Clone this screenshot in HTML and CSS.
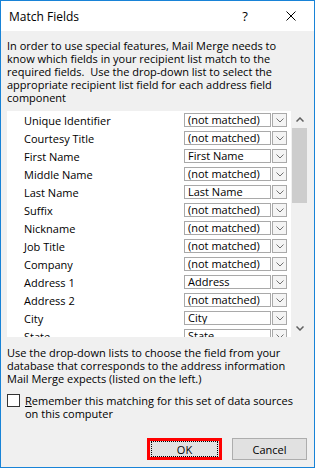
FILE: index.html
```html
<!DOCTYPE html>
<html>
<head>
<meta charset="utf-8">
<link rel="stylesheet" href="styles.css">
</head>
<body>
<div class="window">
  <div class="titlebar">
    <span class="title">Match Fields</span>
    <span class="cap help">?</span>
    <span class="cap close"><svg width="10" height="10" viewBox="0 0 10 10"><path d="M0.5 0.5L9.5 9.5M9.5 0.5L0.5 9.5" stroke="#000" stroke-width="1" fill="none"/></svg></span>
  </div>
  <div class="content">
    <p class="intro">In order to use special features, Mail Merge needs to<br>know which fields in your recipient list match to the<br>required fields.&nbsp; Use the drop-down list to select the<br>appropriate recipient list field for each address field<br>component</p>
    <div class="list">
      <div class="rows">
        <div class="row"><span class="label">Unique Identifier</span><span class="dd"><span class="dd-val">(not matched)</span><span class="dd-btn"><svg width="8" height="5" viewBox="0 0 8 5"><path d="M0.5 0.5L4 4L7.5 0.5" stroke="#707070" fill="none"/></svg></span></span></div>
        <div class="row"><span class="label">Courtesy Title</span><span class="dd"><span class="dd-val">(not matched)</span><span class="dd-btn"><svg width="8" height="5" viewBox="0 0 8 5"><path d="M0.5 0.5L4 4L7.5 0.5" stroke="#707070" fill="none"/></svg></span></span></div>
        <div class="row"><span class="label">First Name</span><span class="dd"><span class="dd-val">First Name</span><span class="dd-btn"><svg width="8" height="5" viewBox="0 0 8 5"><path d="M0.5 0.5L4 4L7.5 0.5" stroke="#707070" fill="none"/></svg></span></span></div>
        <div class="row"><span class="label">Middle Name</span><span class="dd"><span class="dd-val">(not matched)</span><span class="dd-btn"><svg width="8" height="5" viewBox="0 0 8 5"><path d="M0.5 0.5L4 4L7.5 0.5" stroke="#707070" fill="none"/></svg></span></span></div>
        <div class="row"><span class="label">Last Name</span><span class="dd"><span class="dd-val">Last Name</span><span class="dd-btn"><svg width="8" height="5" viewBox="0 0 8 5"><path d="M0.5 0.5L4 4L7.5 0.5" stroke="#707070" fill="none"/></svg></span></span></div>
        <div class="row"><span class="label">Suffix</span><span class="dd"><span class="dd-val">(not matched)</span><span class="dd-btn"><svg width="8" height="5" viewBox="0 0 8 5"><path d="M0.5 0.5L4 4L7.5 0.5" stroke="#707070" fill="none"/></svg></span></span></div>
        <div class="row"><span class="label">Nickname</span><span class="dd"><span class="dd-val">(not matched)</span><span class="dd-btn"><svg width="8" height="5" viewBox="0 0 8 5"><path d="M0.5 0.5L4 4L7.5 0.5" stroke="#707070" fill="none"/></svg></span></span></div>
        <div class="row"><span class="label">Job Title</span><span class="dd"><span class="dd-val">(not matched)</span><span class="dd-btn"><svg width="8" height="5" viewBox="0 0 8 5"><path d="M0.5 0.5L4 4L7.5 0.5" stroke="#707070" fill="none"/></svg></span></span></div>
        <div class="row"><span class="label">Company</span><span class="dd"><span class="dd-val">(not matched)</span><span class="dd-btn"><svg width="8" height="5" viewBox="0 0 8 5"><path d="M0.5 0.5L4 4L7.5 0.5" stroke="#707070" fill="none"/></svg></span></span></div>
        <div class="row"><span class="label">Address 1</span><span class="dd"><span class="dd-val">Address</span><span class="dd-btn"><svg width="8" height="5" viewBox="0 0 8 5"><path d="M0.5 0.5L4 4L7.5 0.5" stroke="#707070" fill="none"/></svg></span></span></div>
        <div class="row"><span class="label">Address 2</span><span class="dd"><span class="dd-val">(not matched)</span><span class="dd-btn"><svg width="8" height="5" viewBox="0 0 8 5"><path d="M0.5 0.5L4 4L7.5 0.5" stroke="#707070" fill="none"/></svg></span></span></div>
        <div class="row"><span class="label">City</span><span class="dd"><span class="dd-val">City</span><span class="dd-btn"><svg width="8" height="5" viewBox="0 0 8 5"><path d="M0.5 0.5L4 4L7.5 0.5" stroke="#707070" fill="none"/></svg></span></span></div>
        <div class="row"><span class="label">State</span><span class="dd"><span class="dd-val">State</span><span class="dd-btn"><svg width="8" height="5" viewBox="0 0 8 5"><path d="M0.5 0.5L4 4L7.5 0.5" stroke="#707070" fill="none"/></svg></span></span></div>
      </div>
      <div class="sb">
        <div class="sb-btn"><svg width="8" height="5" viewBox="0 0 8 5"><path d="M0.5 4.5L4 1L7.5 4.5" stroke="#606060" stroke-width="1.5" fill="none"/></svg></div>
        <div class="thumb"></div>
        <div class="sb-space"></div>
        <div class="sb-btn"><svg width="8" height="5" viewBox="0 0 8 5"><path d="M0.5 0.5L4 4L7.5 0.5" stroke="#606060" stroke-width="1.5" fill="none"/></svg></div>
      </div>
    </div>
    <p class="note">Use the drop-down lists to choose the field from your<br>database that corresponds to the address information<br>Mail Merge expects (listed on the left.)</p>
    <div class="check-row">
      <span class="checkbox"></span>
      <span class="check-label"><u>R</u>emember this matching for this set of data sources<br>on this computer</span>
    </div>
    <div class="buttons">
      <button class="btn btn-ok"><span class="focus">OK</span></button>
      <button class="btn btn-cancel">Cancel</button>
    </div>
  </div>
</div>
</body>
</html>
```

FILE: styles.css
```css
* { box-sizing: border-box; }
body {
  margin: 0;
  font-family: "Open Sans", "Noto Sans", sans-serif;
  font-size: 11px;
  color: #000;
}
.window {
  width: 315px;
  height: 468px;
  border: 1px solid #1883d7;
  background: #f0f0f0;
  display: flex;
  flex-direction: column;
}
.titlebar {
  height: 30px;
  flex-shrink: 0;
  background: #fff;
  display: flex;
  align-items: center;
}
.title {
  flex: 1;
  padding-left: 8px;
  font-size: 12px;
}
.cap {
  width: 46px;
  height: 30px;
  display: flex;
  align-items: center;
  justify-content: center;
}
.help {
  font-size: 13px;
}
.content {
  flex: 1;
  display: flex;
  flex-direction: column;
  padding: 8px 6px 0 6px;
}
.intro, .note {
  margin: 0;
  line-height: 13px;
  white-space: nowrap;
}
.list {
  margin-top: 7px;
  height: 226px;
  display: flex;
  flex-shrink: 0;
}
.rows {
  flex: 1;
  background: #fff;
  overflow: hidden;
  padding-top: 2px;
}
.row {
  height: 14px;
  margin-bottom: 4px;
  display: flex;
  align-items: center;
}
.label {
  width: 177px;
  padding-left: 17px;
  white-space: nowrap;
}
.dd {
  width: 103px;
  height: 14px;
  display: flex;
}
.dd-val {
  flex: 1;
  border: 1px solid #a9a9a9;
  padding-left: 3px;
  line-height: 12px;
  white-space: nowrap;
  overflow: hidden;
}
.dd-btn {
  width: 15px;
  margin-left: 1px;
  border: 1px solid #a9a9a9;
  background: #f4f4f4;
  display: flex;
  justify-content: center;
  align-items: flex-end;
  padding-bottom: 3px;
}
.dd-btn svg { display: block; }
.sb {
  width: 17px;
  background: #f0f0f0;
  display: flex;
  flex-direction: column;
}
.sb-btn {
  height: 17px;
  display: flex;
  align-items: center;
  justify-content: center;
}
.sb-btn svg { display: block; }
.thumb {
  height: 75px;
  margin: 0 1px;
  background: #cdcdcd;
}
.sb-space { flex: 1; }
.note {
  margin-top: 9px;
}
.check-row {
  margin-top: 9px;
  display: flex;
  align-items: flex-start;
  gap: 5px;
}
.checkbox {
  width: 13px;
  height: 13px;
  border: 1px solid #333;
  background: #fff;
  flex-shrink: 0;
}
.check-label {
  line-height: 13px;
  white-space: nowrap;
}
.buttons {
  margin-top: auto;
  display: flex;
  justify-content: flex-end;
  gap: 10px;
  padding: 0 1px 7px 0;
}
.btn {
  width: 75px;
  height: 22px;
  margin: 0;
  padding: 0;
  font-family: inherit;
  font-size: 11px;
  color: #000;
  background: #e1e1e1;
  display: flex;
  align-items: stretch;
  justify-content: center;
}
.btn-cancel {
  border: 1px solid #adadad;
  align-items: center;
}
.btn-ok {
  border: 3px solid #ff0000;
  padding: 0 1px 0 1px;
}
.focus {
  flex: 1;
  border: 1px dotted #000;
  display: flex;
  align-items: center;
  justify-content: center;
}
```
